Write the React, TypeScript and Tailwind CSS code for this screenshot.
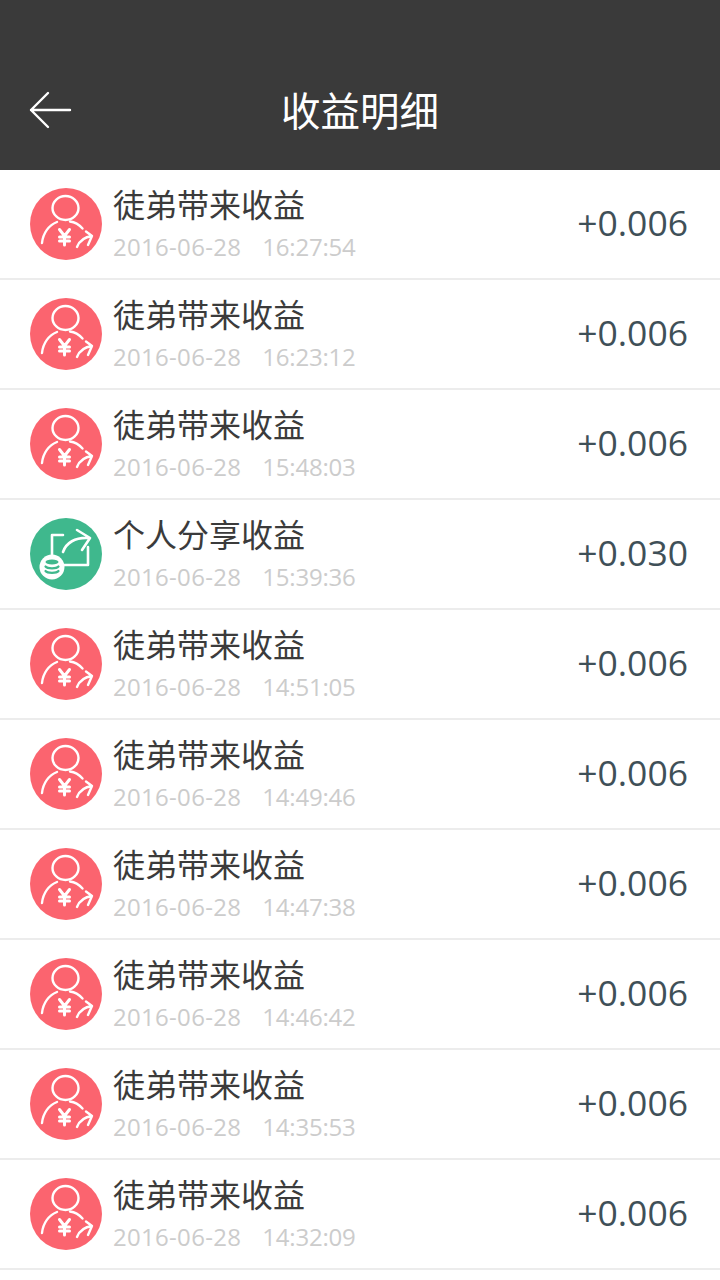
const rows = [
  { title: '徒弟带来收益', date: '2016-06-28', time: '16:27:54', amount: '+0.006', kind: 'referral' },
  { title: '徒弟带来收益', date: '2016-06-28', time: '16:23:12', amount: '+0.006', kind: 'referral' },
  { title: '徒弟带来收益', date: '2016-06-28', time: '15:48:03', amount: '+0.006', kind: 'referral' },
  { title: '个人分享收益', date: '2016-06-28', time: '15:39:36', amount: '+0.030', kind: 'share' },
  { title: '徒弟带来收益', date: '2016-06-28', time: '14:51:05', amount: '+0.006', kind: 'referral' },
  { title: '徒弟带来收益', date: '2016-06-28', time: '14:49:46', amount: '+0.006', kind: 'referral' },
  { title: '徒弟带来收益', date: '2016-06-28', time: '14:47:38', amount: '+0.006', kind: 'referral' },
  { title: '徒弟带来收益', date: '2016-06-28', time: '14:46:42', amount: '+0.006', kind: 'referral' },
  { title: '徒弟带来收益', date: '2016-06-28', time: '14:35:53', amount: '+0.006', kind: 'referral' },
  { title: '徒弟带来收益', date: '2016-06-28', time: '14:32:09', amount: '+0.006', kind: 'referral' },
];

const ReferralIcon = () => (
  <svg width="72" height="72" viewBox="0 0 72 72" className="shrink-0">
    <circle cx="36" cy="36" r="36" fill="#fb646f" />
    <g fill="none" stroke="#fff" strokeWidth="2.4" strokeLinecap="round" strokeLinejoin="round">
      <ellipse cx="35.500" cy="20" rx="13" ry="12" />
      <path d="M12 55c1-10 7-18 15-21M40 33.500c5 .6 9 3 12.500 7" />
      <path d="M29.500 41.500l5 6.500 5-6.500M34.500 48v9M29.500 49h10M29.500 53h10" strokeWidth="3" />
      <path d="M47 59c2-5 7-10 15-11M56 43.500l6 4.500-4 9" />
    </g>
  </svg>
);

const ShareIcon = () => (
  <svg width="72" height="72" viewBox="0 0 72 72" className="shrink-0">
    <circle cx="36" cy="36" r="36" fill="#3fb88d" />
    <g fill="none" stroke="#fff" strokeWidth="2.6" strokeLinecap="round" strokeLinejoin="round">
      <path d="M33 17H22v22M58 29v18H33" />
      <path d="M33 34c3-9 12-15 26-14M47 12l13 8-8 12" />
    </g>
    <circle cx="22" cy="49" r="12.500" fill="#fff" />
    <g fill="none" stroke="#3fb88d" strokeWidth="2.2" strokeLinecap="round">
      <ellipse cx="22" cy="44" rx="6.500" ry="2.500" fill="#3fb88d" stroke="none" />
      <path d="M15.500 48.500c2 2.400 11 2.400 13 0M15.500 53c2 2.400 11 2.400 13 0" />
    </g>
  </svg>
);

const App = () => (
  <main className="min-h-[1280px] w-[720px] overflow-hidden bg-white font-['Noto_Sans_CJK_SC',sans-serif]">
    <header className="relative flex h-[170px] items-end bg-[#3a3a3a] pb-[31px]">
      <div className="flex h-[60px] w-full items-center justify-center">
        <svg width="44" height="38" viewBox="0 0 44 38" className="absolute left-[29px] top-[91px]" fill="none" stroke="#fff" strokeWidth="2.4" strokeLinecap="round" strokeLinejoin="round">
          <path d="M19 2 2 19l17 17M2 19h39" />
        </svg>
        <h1 className="text-[39.500px] leading-none text-white">收益明细</h1>
      </div>
    </header>
    <ul>
      {rows.map((row) => (
        <li key={row.time} className="flex h-[110px] items-center border-b-2 border-[#ececec] pl-[30px] pr-[32px]">
          {row.kind === 'share' ? <ShareIcon /> : <ReferralIcon />}
          <div className="ml-[11px] flex-1 pt-[4px]">
            <div className="-mt-[8px] text-[32px] leading-[42px] text-[#3b3b3b]">{row.title}</div>
            <div className="mt-[7px] flex gap-[21px] font-['Open_Sans',sans-serif] text-[24px] leading-[32px] text-[#cccccc]">
              <span className="tracking-[0.3px]">{row.date}</span>
              <span className="tracking-[-0.2px]">{row.time}</span>
            </div>
          </div>
          <div className="-mt-[3px] font-['Open_Sans',sans-serif] text-[35.500px] text-[#3f5058]">{row.amount}</div>
        </li>
      ))}
    </ul>
  </main>
);

export default App;
